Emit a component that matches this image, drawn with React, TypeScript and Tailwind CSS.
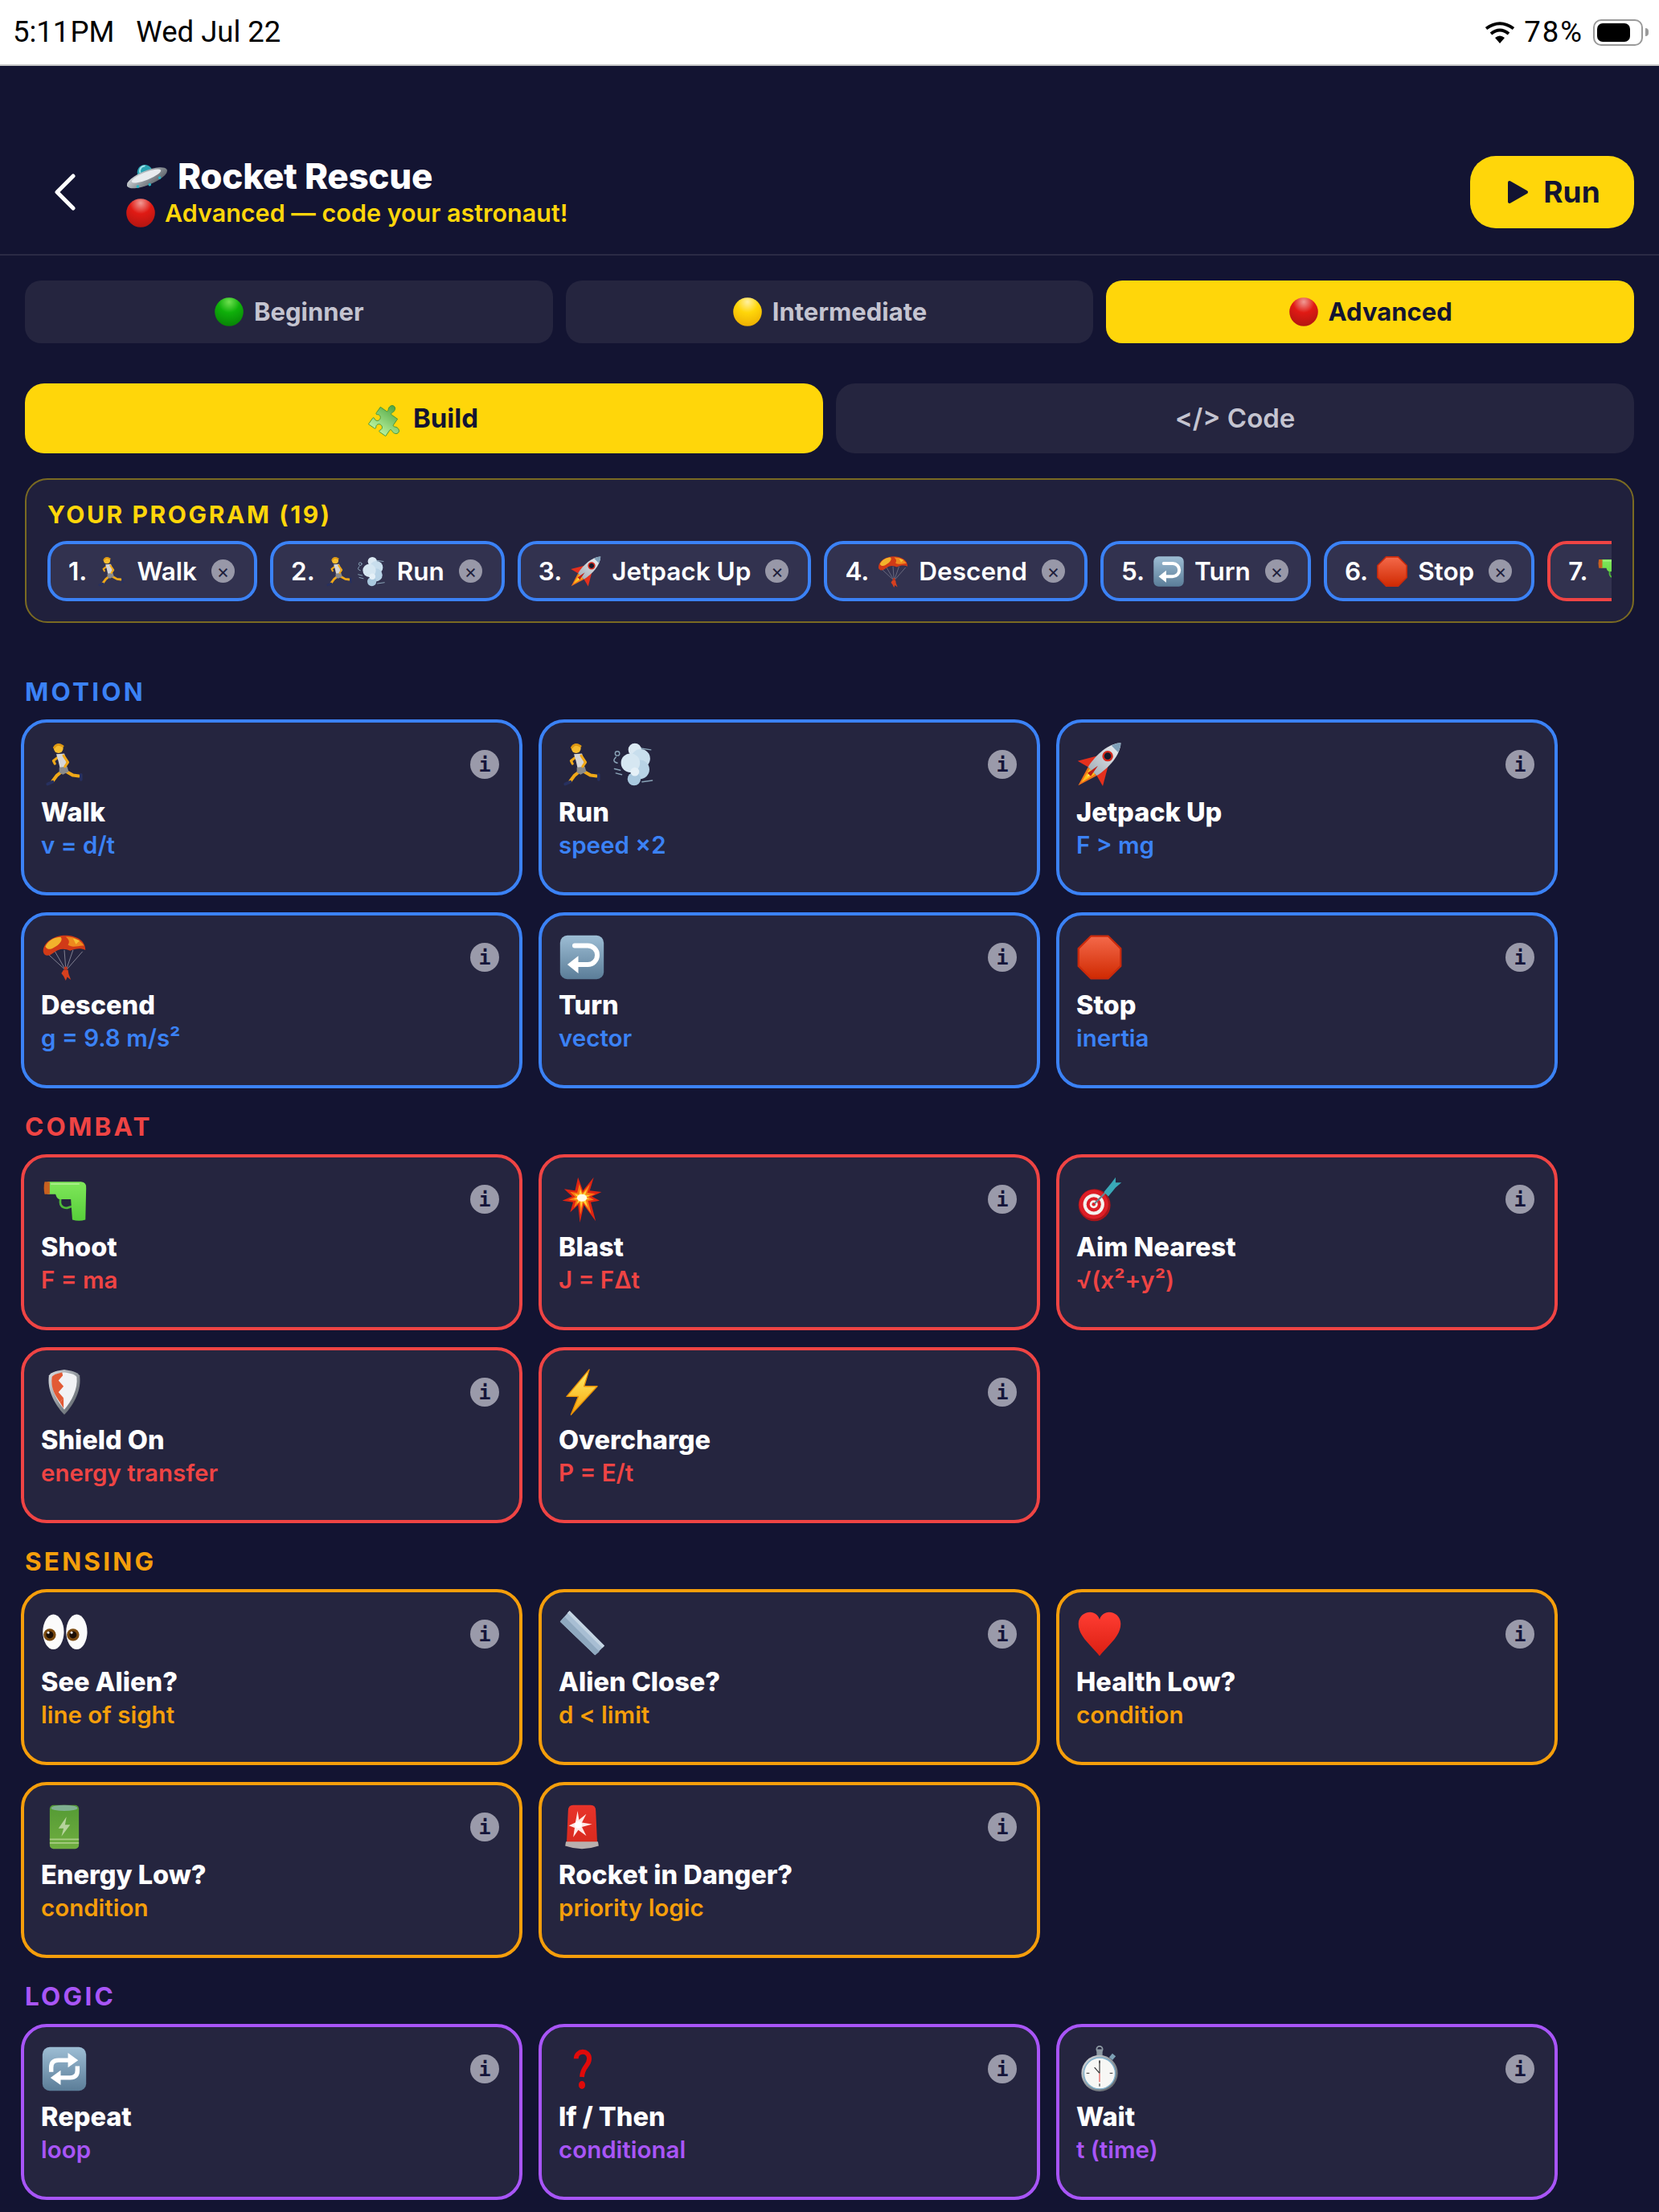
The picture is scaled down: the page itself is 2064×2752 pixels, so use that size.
import type { ReactNode } from 'react';

type BlockItem = { emoji: string[]; title: string; hint: string };
type Section = {
  name: string;
  labelClass: string;
  borderClass: string;
  hintClass: string;
  items: BlockItem[];
};

const SECTIONS: Section[] = [
  {
    name: 'MOTION',
    labelClass: 'text-[#3b82f6]',
    borderClass: 'border-[#3b82f6]',
    hintClass: 'text-[#3b82f6]',
    items: [
      { emoji: ['runner'], title: 'Walk', hint: 'v = d/t' },
      { emoji: ['runner', 'dash'], title: 'Run', hint: 'speed ×2' },
      { emoji: ['rocket'], title: 'Jetpack Up', hint: 'F > mg' },
      { emoji: ['parachute'], title: 'Descend', hint: 'g = 9.8 m/s²' },
      { emoji: ['turn'], title: 'Turn', hint: 'vector' },
      { emoji: ['stop'], title: 'Stop', hint: 'inertia' },
    ],
  },
  {
    name: 'COMBAT',
    labelClass: 'text-[#ef4444]',
    borderClass: 'border-[#ef4444]',
    hintClass: 'text-[#ef4444]',
    items: [
      { emoji: ['pistol'], title: 'Shoot', hint: 'F = ma' },
      { emoji: ['blast'], title: 'Blast', hint: 'J = FΔt' },
      { emoji: ['dart'], title: 'Aim Nearest', hint: '√(x²+y²)' },
      { emoji: ['shield'], title: 'Shield On', hint: 'energy transfer' },
      { emoji: ['bolt'], title: 'Overcharge', hint: 'P = E/t' },
    ],
  },
  {
    name: 'SENSING',
    labelClass: 'text-[#f59e0b]',
    borderClass: 'border-[#f59e0b]',
    hintClass: 'text-[#f59e0b]',
    items: [
      { emoji: ['eyes'], title: 'See Alien?', hint: 'line of sight' },
      { emoji: ['ruler'], title: 'Alien Close?', hint: 'd < limit' },
      { emoji: ['heart'], title: 'Health Low?', hint: 'condition' },
      { emoji: ['battery'], title: 'Energy Low?', hint: 'condition' },
      { emoji: ['siren'], title: 'Rocket in Danger?', hint: 'priority logic' },
    ],
  },
  {
    name: 'LOGIC',
    labelClass: 'text-[#a855f7]',
    borderClass: 'border-[#a855f7]',
    hintClass: 'text-[#a855f7]',
    items: [
      { emoji: ['repeat'], title: 'Repeat', hint: 'loop' },
      { emoji: ['question'], title: 'If / Then', hint: 'conditional' },
      { emoji: ['stopwatch'], title: 'Wait', hint: 't (time)' },
    ],
  },
];

const PROGRAM = [
  { emoji: ['runner'], label: 'Walk', border: 'border-[#3b82f6]' },
  { emoji: ['runner', 'dash'], label: 'Run', border: 'border-[#3b82f6]' },
  { emoji: ['rocket'], label: 'Jetpack Up', border: 'border-[#3b82f6]' },
  { emoji: ['parachute'], label: 'Descend', border: 'border-[#3b82f6]' },
  { emoji: ['turn'], label: 'Turn', border: 'border-[#3b82f6]' },
  { emoji: ['stop'], label: 'Stop', border: 'border-[#3b82f6]' },
  { emoji: ['pistol'], label: 'Shoot', border: 'border-[#ef4444]' },
];

const BLAST_POINTS =
  '28,2 33,20 44,2 40,20 52,22 42,28 50,34 41,36 46,62 34,40 30,64 28,40 20,50 23,36 12,34 22,28 14,18 25,20';

const EMOJI: Record<string, ReactNode> = {
  runner: (
    <g fill="none" strokeLinecap="round" strokeLinejoin="round">
      <path d="M25 21 L17 27 L19 31" stroke="#f0a818" strokeWidth="3.5" />
      <path d="M27 43 L22 47 L16 55" stroke="#f0a818" strokeWidth="4.5" />
      <path d="M35 42 L44 47 L52 48" stroke="#f0a818" strokeWidth="4.5" />
      <path d="M21 18 L32 17 Q36 27 35 37 L26 37 Q24 27 21 18Z" fill="#d6d6d6" />
      <path d="M25 36 L36 35 L38 42 L30 46 L25 43Z" fill="#8a8a8a" />
      <path d="M31 20 L37 29 L33 35" stroke="#f0a818" strokeWidth="3.5" />
      <circle cx="24" cy="10" r="6.5" fill="#f6bc2f" stroke="none" />
      <path d="M18 9 Q22 2 30 7" stroke="#dd9712" strokeWidth="3" />
      <path d="M9 59 L16 56" stroke="#27305f" strokeWidth="4" />
      <path d="M55 46 L55 53" stroke="#27305f" strokeWidth="4" />
    </g>
  ),
  dash: (
    <g>
      <g stroke="#8aa4b8" strokeWidth="1.6" strokeLinecap="round" fill="none">
        <path d="M8 22 Q2 28 10 30 M6 38 L14 40 M8 44 L16 46 M42 10 L56 12 M44 56 L58 54" />
        <circle cx="10" cy="17" r="3" />
      </g>
      <circle cx="34" cy="12" r="9" fill="#dbe9f3" />
      <circle cx="42" cy="24" r="13" fill="#c8deed" />
      <circle cx="41" cy="39" r="13" fill="#b8d3e6" />
      <circle cx="33" cy="52" r="9" fill="#a9c8de" />
      <circle cx="28" cy="30" r="13" fill="#d6e7f2" />
      <circle cx="34" cy="42" r="6" fill="#e5f0f7" />
    </g>
  ),
  rocket: (
    <g transform="rotate(45 32 32) translate(0 -2) scale(1.06) translate(-2 -1)">
      <path d="M24 46 L32 72 L40 46Z" fill="#f2731a" />
      <path d="M27 46 L32 66 L37 46Z" fill="#ffc21a" />
      <path d="M30 46 L32 56 L34 46Z" fill="#fff1a8" />
      <path d="M23 26 L9 50 L24 46Z" fill="#e5301d" />
      <path d="M41 26 L55 50 L40 46Z" fill="#e5301d" />
      <path d="M32 -6 C43 6 44 28 40 46 L24 46 C20 28 21 6 32 -6Z" fill="url(#e-rocket)" />
      <path d="M32 -6 C28 -2 27 2 26 5 L38 5 C37 2 36 -2 32 -6Z" fill="#7fa0b8" />
      <circle cx="32" cy="18" r="7" fill="#d5291c" />
      <circle cx="32" cy="18" r="4.5" fill="#141a2a" />
      <path d="M32 36 L29 52 L35 52Z" fill="#c01d14" />
    </g>
  ),
  parachute: (
    <g>
      <g stroke="#8a8a9a" strokeWidth="1" fill="none">
        <path d="M8 26 L32 48 M18 22 L33 48 M32 22 L34 48 M44 22 L35 48 M57 24 L36 48" />
      </g>
      <path d="M31 49 L37 49 L38 55 L41 63 L36 59 L34 64 L31 58 L28 54Z" fill="#d6401f" />
      <circle cx="34" cy="47" r="2.4" fill="#c2341a" />
      <path d="M3 24 C3 10 20 2 33 2 C47 2 61 8 61 22 C55 19 47 20 40 23 C32 19 24 20 17 26 C11 31 4 31 3 24Z" fill="#d13a17" />
      <path d="M6 17 C10 8 20 4 27 4 C31 8 25 15 17 19 C12 22 8 21 6 17Z" fill="#f2b32c" />
      <path d="M34 4 C44 3 54 8 59 16 C52 15 44 20 37 15 C40 10 38 7 34 4Z" fill="#ee8a1e" />
      <path d="M44 6 L53 9 L48 14Z" fill="#f6c233" />
    </g>
  ),
  turn: (
    <g>
      <rect x="2" y="2" width="60" height="60" rx="10" fill="url(#e-slate)" />
      <path d="M22 16 H40 A13 13 0 0 1 40 42 H24" fill="none" stroke="#fff" strokeWidth="6.5" strokeLinecap="round" />
      <path d="M27 30 L12 42 L27 54Z" fill="#fff" />
    </g>
  ),
  stop: (
    <path
      d="M20 3 H44 L61 20 V44 L44 61 H20 L3 44 V20Z"
      fill="url(#e-stop)"
      stroke="#c92a0c"
      strokeWidth="2.5"
      strokeLinejoin="round"
    />
  ),
  pistol: (
    <g>
      <path d="M27 30 Q24 44 36 44 L42 42" fill="none" stroke="#4eb83a" strokeWidth="3" />
      <path d="M9 8 H55 Q63 9 62 17 L61 60 Q52 63 43 60 L41 32 H26 Q22 32 20 25 H9Z" fill="url(#e-pistol)" />
      <path d="M5 8 H12 V25 H5 Q3 16 5 8Z" fill="#c8601f" />
      <path d="M14 11 H52" stroke="#a8ee88" strokeWidth="2" strokeLinecap="round" />
    </g>
  ),
  blast: (
    <g transform="translate(32 32) scale(1.35 1) translate(-32 -32)">
      <polygon points={BLAST_POINTS} fill="#e02412" />
      <polygon points={BLAST_POINTS} fill="#f97a14" transform="translate(32 30) scale(0.68) translate(-32 -30)" />
      <polygon points={BLAST_POINTS} fill="#ffd53a" transform="translate(32 30) scale(0.42) translate(-32 -30)" />
      <circle cx="32" cy="30" r="5" fill="#fffbe6" />
    </g>
  ),
  dart: (
    <g>
      <circle cx="25" cy="40" r="22" fill="#a9151a" />
      <circle cx="24" cy="39" r="20" fill="#dd1e26" />
      <circle cx="24" cy="39" r="14.5" fill="#f4f1ee" />
      <circle cx="24" cy="39" r="10" fill="#dd1e26" />
      <circle cx="24" cy="39" r="5.5" fill="#f4f1ee" />
      <circle cx="24" cy="39" r="2.5" fill="#dd1e26" />
      <path d="M25 38 L46 17" stroke="#6e7f8a" strokeWidth="2.5" />
      <path d="M38 22 L48 10 L54 2 L54 9 L62 9 L54 16 L44 28Z" fill="#39a9b8" />
    </g>
  ),
  shield: (
    <g>
      <path d="M32 1 C40 2 50 4 53 9 C56 28 46 48 32 63 C18 48 8 28 11 9 C14 4 24 2 32 1Z" fill="url(#e-steel)" />
      <path d="M32 5 C39 6 46 7 49 11 C51 28 42 44 32 56 C22 44 13 28 15 11 C18 7 25 6 32 5Z" fill="#f1f2f4" />
      <path d="M15 11 C18 7 25 6 29 5 L30 9 L24 16 L31 24 L24 32 L31 40 L26 46 C19 36 13 26 15 11Z" fill="#e25a34" />
      <path d="M26 46 L31 40 L31 54 Z" fill="#e25a34" />
    </g>
  ),
  bolt: (
    <path
      d="M42 1 L11 38 H27 L17 63 L53 24 H35Z"
      fill="url(#e-bolt)"
      stroke="#e88f05"
      strokeWidth="1.5"
      strokeLinejoin="round"
    />
  ),
  eyes: (
    <g>
      <ellipse cx="17" cy="29" rx="14.5" ry="24" fill="#fbfbfb" />
      <ellipse cx="49" cy="29" rx="14.5" ry="24" fill="#fbfbfb" />
      <circle cx="12" cy="33" r="8.5" fill="#7a4a10" />
      <circle cx="44" cy="33" r="8.5" fill="#7a4a10" />
      <circle cx="12" cy="33" r="5" fill="#1c0f06" />
      <circle cx="44" cy="33" r="5" fill="#1c0f06" />
      <circle cx="10" cy="30" r="1.6" fill="#fff" />
      <circle cx="42" cy="30" r="1.6" fill="#fff" />
    </g>
  ),
  ruler: (
    <g>
      <polygon points="2,15 15,0 63,48 50,61" fill="#a8bed3" />
      <polygon points="2,15 8,8 56,56 50,61" fill="#8fa8bf" />
      <polygon points="12,3 15,0 63,48 60,51" fill="#c5d5e3" />
    </g>
  ),
  heart: (
    <path
      d="M32 62 C20 47 3 35 3 18 C3 8 11 2 19 2 C25 2 30 6 32 12 C34 6 39 2 45 2 C53 2 61 8 61 18 C61 35 44 47 32 62Z"
      fill="url(#e-heart)"
    />
  ),
  battery: (
    <g>
      <rect x="12" y="2" width="40" height="60" rx="5" fill="url(#e-battery)" />
      <ellipse cx="32" cy="6" rx="18" ry="4" fill="#7fb090" />
      <path d="M35 18 L24 34 H31 L28 45 L40 29 H33Z" fill="#b6d39c" />
      <path d="M12 49 H52 M12 54 H52" stroke="#a9cd84" strokeWidth="1.8" />
    </g>
  ),
  siren: (
    <g>
      <path d="M13 10 Q13 2 20 2 H44 Q51 2 51 10 L53 54 H11Z" fill="url(#e-siren)" />
      <path d="M10 52 H54 L55 58 Q32 66 9 58Z" fill="#b8b0ae" />
      <path d="M26 10 L28 22 L38 14 L32 26 L46 28 L32 32 L38 44 L27 36 L20 46 L22 33 L14 30 L23 26Z" fill="#ffe9e6" />
      <circle cx="27" cy="29" r="5" fill="#fff" />
    </g>
  ),
  repeat: (
    <g>
      <rect x="2" y="2" width="60" height="60" rx="10" fill="url(#e-slate)" />
      <g fill="none" stroke="#fff" strokeWidth="6">
        <path d="M14 36 V30 Q14 20 24 20 H38" />
        <path d="M50 28 V34 Q50 44 40 44 H26" />
      </g>
      <path d="M37 10 L51 20 L37 30Z" fill="#fff" />
      <path d="M27 34 L13 44 L27 54Z" fill="#fff" />
    </g>
  ),
  question: (
    <g>
      <path d="M24 18 C24 6 42 5 42 18 C42 28 33 28 32 43" fill="none" stroke="#e00a0a" strokeWidth="6.5" />
      <ellipse cx="32" cy="54" rx="4.5" ry="5.5" fill="#e00a0a" />
    </g>
  ),
  stopwatch: (
    <g>
      <rect x="28" y="5" width="8" height="10" fill="#8d99a3" />
      <circle cx="32" cy="5" r="4" fill="none" stroke="#8d99a3" strokeWidth="2" />
      <rect x="47" y="12" width="6" height="7" fill="#7da0b5" transform="rotate(40 50 15)" />
      <circle cx="32" cy="38" r="25" fill="url(#e-steel)" />
      <circle cx="32" cy="38" r="21.5" fill="#f7f7f5" stroke="#7fb0cc" strokeWidth="1.5" />
      <path d="M32 20 V24 M32 52 V56 M14 38 H18 M46 38 H50" stroke="#555" strokeWidth="1.5" />
      <path d="M32 38 L25 30 M32 38 V21" stroke="#333" strokeWidth="1.3" />
      <path d="M32 38 V50" stroke="#d22" strokeWidth="1" />
    </g>
  ),
  ufo: (
    <g transform="rotate(-22 32 32)">
      <path d="M20 28 C20 10 44 10 44 28Z" fill="#2aa3b2" />
      <path d="M25 24 C26 17 32 15 36 17" stroke="#9fe3ea" strokeWidth="2.5" fill="none" />
      <ellipse cx="32" cy="35" rx="33" ry="11" fill="url(#e-steel)" />
      <ellipse cx="32" cy="32" rx="24" ry="6" fill="#e8ebee" />
      <circle cx="14" cy="42" r="2.2" fill="#27b4c4" />
      <circle cx="32" cy="46" r="2.2" fill="#27b4c4" />
      <circle cx="50" cy="42" r="2.2" fill="#27b4c4" />
    </g>
  ),
  puzzle: (
    <path
      transform="translate(-2 3) rotate(35 32 30)"
      d="M16 18 H27 C29 18 29 16 28 14 C26 10 28 5 32 5 C36 5 38 10 36 14 C35 16 35 18 37 18 H48 V29 C48 31 50 31 52 30 C56 28 61 30 61 34 C61 38 56 40 52 38 C50 37 48 37 48 39 V50 H37 C35 50 35 48 36 47 C38 44 36 40 32 40 C28 40 26 44 28 47 C29 48 29 50 27 50 H16 V39 C16 37 18 37 19 38 C22 40 26 38 26 34 C26 30 22 28 19 30 C18 31 16 31 16 29Z"
      fill="url(#e-puzzle)"
      stroke="#3d8f3a"
      strokeWidth="1"
    />
  ),
  red: <ellipse cx="32" cy="32" rx="30" ry="30" fill="url(#e-red)" />,
  green: <ellipse cx="32" cy="32" rx="30" ry="30" fill="url(#e-green)" />,
  yellow: <ellipse cx="32" cy="32" rx="30" ry="30" fill="url(#e-yellow)" />,
};

function EmojiDefs() {
  const linear = (id: string, top: string, bottom: string) => (
    <linearGradient id={id} x1="0" y1="0" x2="0" y2="1">
      <stop offset="0" stopColor={top} />
      <stop offset="1" stopColor={bottom} />
    </linearGradient>
  );
  const ball = (id: string, light: string, mid: string, dark: string) => (
    <radialGradient id={id} cx="0.5" cy="0.15" r="0.95">
      <stop offset="0" stopColor={light} />
      <stop offset="0.4" stopColor={mid} />
      <stop offset="1" stopColor={dark} />
    </radialGradient>
  );
  return (
    <svg className="h-0 w-0" aria-hidden="true">
      <defs>
        {linear('e-slate', '#9dbdd4', '#5b7d98')}
        {linear('e-stop', '#f4694a', '#d02a02')}
        {linear('e-pistol', '#7fe65a', '#57cf3a')}
        {linear('e-heart', '#ff3d33', '#db1f12')}
        {linear('e-battery', '#549a34', '#6fae40')}
        {linear('e-siren', '#e8332a', '#d92a1e')}
        {linear('e-bolt', '#fff06a', '#f7a30a')}
        {linear('e-puzzle', '#4fa544', '#b6f09a')}
        {linear('e-rocket', '#f2f4f6', '#a9b3bc')}
        <linearGradient id="e-steel" x1="0" y1="0" x2="1" y2="1">
          <stop offset="0" stopColor="#dfe3e6" />
          <stop offset="0.55" stopColor="#8b9197" />
          <stop offset="1" stopColor="#545a60" />
        </linearGradient>
        {ball('e-red', '#f09a94', '#e01a14', '#aa1410')}
        {ball('e-green', '#6fe050', '#0fb00a', '#067a06')}
        {ball('e-yellow', '#fff0a0', '#ffd60a', '#eaa800')}
      </defs>
    </svg>
  );
}

function Emoji({ name, size }: { name: string; size: number }) {
  return (
    <svg width={size} height={size} viewBox="0 0 64 64" className="shrink-0 overflow-visible" aria-hidden="true">
      {EMOJI[name]}
    </svg>
  );
}

function InfoDot() {
  return (
    <span className="flex h-[36px] w-[36px] shrink-0 items-center justify-center rounded-full bg-[#9a9aaa] font-['DejaVu_Sans_Mono',monospace] text-[25px] leading-none font-bold text-[#15153a]">
      i
    </span>
  );
}

function BlockCard({ item, section }: { item: BlockItem; section: Section }) {
  return (
    <div className={`h-[219px] rounded-[32px] border-4 bg-[#25253f] pt-[23px] pr-[25px] pl-[21px] ${section.borderClass}`}>
      <div className="flex h-[58px] items-center justify-between">
        <div className="flex gap-[6px]">
          {item.emoji.map((name) => (
            <Emoji key={name} name={name} size={58} />
          ))}
        </div>
        <InfoDot />
      </div>
      <div className="mt-[11px] text-[32.5px] leading-[40px] font-extrabold text-white">{item.title}</div>
      <div className={`mt-[2px] text-[29.5px] leading-[36px] font-semibold ${section.hintClass}`}>{item.hint}</div>
    </div>
  );
}

function StatusBar() {
  return (
    <div className="flex h-[82px] items-center justify-between border-b-2 border-[#c8c8c8] bg-white pr-[13px] pl-[16px] font-[Roboto,sans-serif] text-[36.5px] text-black">
      <div className="flex gap-[27px]">
        <span className="[word-spacing:-8px]">5:11 PM</span>
        <span>Wed Jul 22</span>
      </div>
      <div className="flex items-center">
        <svg width="38" height="27" viewBox="0 0 38 27" aria-hidden="true">
          <path d="M19 27 L13 20 Q19 15 25 20Z" fill="#000" />
          <path d="M8 15 Q19 6 30 15" fill="none" stroke="#000" strokeWidth="4" />
          <path d="M2 8.5 Q19 -4 36 8.5" fill="none" stroke="#000" strokeWidth="4" />
        </svg>
        <span className="ml-[11px] tracking-[2px]">78%</span>
        <div className="ml-[12px] flex items-center gap-[3px]">
          <div className="h-[33px] w-[62px] rounded-[10px] border-2 border-[#9a9a9a] p-[3px]">
            <div className="h-full w-[41px] rounded-[7px] bg-black" />
          </div>
          <div className="h-[10px] w-[4px] rounded-r-full bg-[#9a9a9a]" />
        </div>
      </div>
    </div>
  );
}

export default function App() {
  const levels = [
    { name: 'green', label: 'Beginner', active: false },
    { name: 'yellow', label: 'Intermediate', active: false },
    { name: 'red', label: 'Advanced', active: true },
  ];

  return (
    <div className="h-[2752px] w-[2064px] overflow-hidden bg-[#131432] font-[Inter,sans-serif]">
      <EmojiDefs />
      <StatusBar />

      <header className="flex h-[236px] items-center border-b-2 border-[#2b2b45] pt-[112px] pr-[31px] pb-[32px] pl-[68px]">
        <svg width="26" height="46" viewBox="0 0 26 46" aria-hidden="true">
          <path d="M23 3 L3 23 L23 43" fill="none" stroke="#fff" strokeWidth="5" strokeLinecap="round" strokeLinejoin="round" />
        </svg>
        <div className="ml-[62px] flex-1 pt-[4px]">
          <div className="flex h-[44px] items-center gap-[13px] text-[44px] font-extrabold text-white">
            <Emoji name="ufo" size={52} />
            <span className="leading-[44px] tracking-[-0.3px]">Rocket Rescue</span>
          </div>
          <div className="mt-[4px] flex h-[40px] items-center gap-[11px] text-[30.5px] font-semibold text-[#ffd60a]">
            <Emoji name="red" size={38} />
            <span>Advanced — code your astronaut!</span>
          </div>
        </div>
        <button
          type="button"
          className="flex h-[90px] w-[204px] items-center justify-center gap-[18px] rounded-[32px] bg-[#ffd60a] pl-[4px] text-[37px] font-bold text-[#131432]"
        >
          <svg width="27" height="30" viewBox="0 0 27 30" aria-hidden="true">
            <path d="M3 3 L24 15 L3 27Z" fill="#131432" stroke="#131432" strokeWidth="4" strokeLinejoin="round" />
          </svg>
          Run
        </button>
      </header>

      <div className="mx-[31px] mt-[31px] grid grid-cols-3 gap-[16px]">
        {levels.map((level) => (
          <button
            key={level.label}
            type="button"
            className={`flex h-[78px] items-center justify-center gap-[12px] rounded-[20px] text-[31px] font-bold ${
              level.active ? 'bg-[#ffd60a] text-[#131432]' : 'bg-[#25253f] text-[#c4c4d0]'
            }`}
          >
            <Emoji name={level.name} size={38} />
            {level.label}
          </button>
        ))}
      </div>

      <div className="mx-[31px] mt-[50px] grid grid-cols-2 gap-[16px]">
        <button
          type="button"
          className="flex h-[87px] items-center justify-center gap-[8px] rounded-[24px] bg-[#ffd60a] pr-[6px] text-[33px] font-bold text-[#131432]"
        >
          <Emoji name="puzzle" size={52} />
          Build
        </button>
        <button
          type="button"
          className="flex h-[87px] items-center justify-center rounded-[24px] bg-[#25253f] text-[33px] font-semibold text-[#c4c4d0]"
        >
          {'</> Code'}
        </button>
      </div>

      <div className="mx-[31px] mt-[31px] h-[180px] rounded-[28px] border-2 border-[#7a6a22] bg-[#20203c] px-[26px] pt-[23px]">
        <div className="text-[30px] leading-[40px] font-bold tracking-[2.6px] text-[#ffd60a]">YOUR PROGRAM (19)</div>
        <div className="mt-[13px] flex gap-[16px] overflow-hidden">
          {PROGRAM.map((chip, index) => (
            <div
              key={chip.label}
              className={`flex h-[75px] shrink-0 items-center rounded-[24px] border-4 bg-[#32324f] pr-[24px] pl-[22px] text-[31.5px] font-semibold text-white ${chip.border}`}
            >
              <span>{index + 1}.</span>
              <span className="mr-[12px] ml-[10px] flex">
                {chip.emoji.map((name) => (
                  <Emoji key={name} name={name} size={40} />
                ))}
              </span>
              <span>{chip.label}</span>
              <span className="ml-[18px] flex h-[29px] w-[29px] items-center justify-center rounded-full bg-[#9898a8] text-[24px] leading-none font-normal text-[#20203c]">
                ×
              </span>
            </div>
          ))}
        </div>
      </div>

      <div className="mt-[68px] ml-[26px] w-[1912px]">
        {SECTIONS.map((section) => (
          <section key={section.name}>
            <div
              className={`mt-[30px] mb-[16px] ml-[5px] h-[36px] text-[31.5px] leading-[36px] font-bold tracking-[3.2px] ${section.labelClass}`}
            >
              {section.name}
            </div>
            <div className="grid grid-cols-3 gap-x-[20px] gap-y-[21px]">
              {section.items.map((item) => (
                <BlockCard key={item.title} item={item} section={section} />
              ))}
            </div>
          </section>
        ))}
      </div>
    </div>
  );
}
